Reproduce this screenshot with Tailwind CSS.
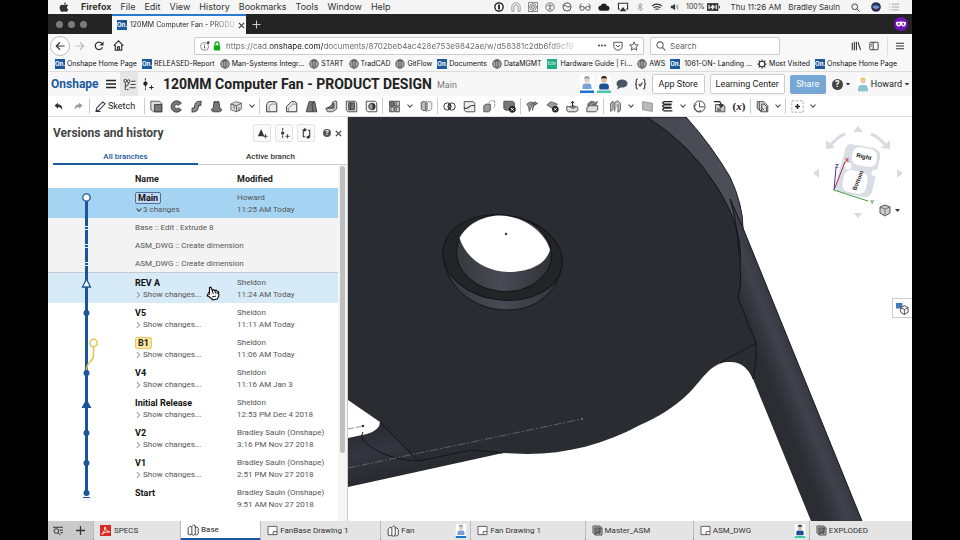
<!DOCTYPE html>
<html lang="en">
<head>
    <meta charset="UTF-8">
    <meta name="viewport" content="width=device-width, initial-scale=1.0">
    <title>120MM Computer Fan - PRODUCT DESIGN</title>
    <script src="https://cdn.jsdelivr.net/npm/@tailwindcss/browser@4"></script>
</head>
<body class="bg-black font-['Roboto',sans-serif] text-[#333]">

    <!-- Shared icons -->
    <svg class="hidden">
        <symbol id="chev" viewBox="0 0 8 8"><path d="M1.5 2.5 4 5.2 6.5 2.5" fill="none" stroke="#444" stroke-width="1.1"/></symbol>
        <symbol id="right" viewBox="0 0 8 8"><path d="M2 1.2 4.6 4 2 6.8" fill="none" stroke="#777"/></symbol>
        <symbol id="caret" viewBox="0 0 8 8"><path d="M1 2.5h6L4 6z" fill="#333"/></symbol>
        <symbol id="globe" viewBox="0 0 12 12"><g fill="none" stroke="#555"><circle cx="6" cy="6" r="5" stroke-width="1.3"/><ellipse cx="6" cy="6" rx="2.2" ry="5"/><path d="M1 6h10M2 3.4h8M2 8.6h8M6 1v10"/></g></symbol>
        <symbol id="part" viewBox="0 0 16 16"><path d="M1.5 5.5 4 3l2.500 1v9.500L4 14.500l-2.500-1zM6.500 3.500 9 1l2 1.500v11l-2.500 1.500-2-1M10.500 4h3l1.500 2v7l-2 1.500h-2" fill="#fff" stroke="#333" stroke-width="1.2"/></symbol>
        <symbol id="drawing" viewBox="0 0 16 16"><path d="M1.500 2h13v12h-13zM9 14v-4.500h5.500" fill="#fff" stroke="#444" stroke-width="1.2"/></symbol>
        <symbol id="asm" viewBox="0 0 16 16"><path d="M1.500 1.500h10l3 3v10h-10l-3-3z" fill="#ddd" stroke="#333" stroke-width="1.3"/><path d="M4 4h7.500v7.500H4z" fill="#777" stroke="#333"/><path d="M4.500 14.500V12h7.500V4.500h2.500" fill="none" stroke="#333"/></symbol>
        <symbol id="person-light" viewBox="0 0 14 18"><path d="M0 0h14v18H0z" fill="#fff"/><circle cx="7" cy="5" r="2.600" fill="#e2cdbd"/><path d="M4.300 4Q4 1 7 1t2.700 3L7 3z" fill="#999"/><path d="M2.500 14Q2 8.500 5 8.500h4Q12 8.500 11.500 14z" fill="#7b9fd6"/><path d="M0 15.500h14V18H0z" fill="#1d72cf"/></symbol>
        <symbol id="person-dark" viewBox="0 0 14 18"><path d="M0 0h14v18H0z" fill="#fff"/><circle cx="7" cy="5" r="2.600" fill="#e2b99c"/><path d="M4.300 4.500Q3.500 1 7 1t2.700 3.500L9 3.300H5z" fill="#222"/><path d="M2.500 14.500Q1 8.500 5 8.500h4Q13 8.500 11.500 14.500z" fill="#1b4f99"/><path d="M0 15.500h14V18H0z" fill="#49c5ac"/></symbol>
    </svg>

    <div class="mx-12 flex min-h-screen flex-col bg-white">

        <!-- macOS menu bar -->
        <nav class="flex h-[14px] items-center bg-[#f5f5f5] pr-3 pl-[11px] font-['Inter',sans-serif] text-[9px] leading-3 whitespace-nowrap text-[#333]">
            <svg class="mr-3 size-[10px]" viewBox="0 0 16 16"><path d="M11 .5C9 .8 8 2.200 8.100 4 10 3.900 11.100 2.300 11 .5zM8.200 4.800C7.200 4.800 6.400 4.200 5 4.200 2.800 4.200 1 6.200 1 9s2 6.800 4 6.800c1.200 0 1.700-.7 3.200-.7s1.900.7 3.100.7c1.700 0 3-2.500 3.500-4-3-1.300-2.900-5 0-6.300-.8-1-2-1.500-3.200-1.500-1.500 0-2.400.8-3.400.8z" fill="#333"/></svg>
            <div class="flex gap-[9px]">
                <b class="font-bold">Firefox</b><span>File</span><span>Edit</span><span>View</span><span>History</span><span>Bookmarks</span><span>Tools</span><span>Window</span><span>Help</span>
            </div>
            <div class="ml-auto flex items-center gap-[7px]">
                <svg class="size-[10px]" viewBox="0 0 12 12"><circle cx="6" cy="6" r="5" fill="none" stroke="#111" stroke-width="1.500"/><path d="M6 3v6" stroke="#111" stroke-width="2"/></svg>
                <svg class="size-[10px]" viewBox="0 0 12 12"><path d="M1 11V6a5 5 0 0 1 10 0v5H8.500V6a2.500 2.500 0 0 0-5 0v5z" fill="none" stroke="#888"/></svg>
                <svg class="size-[10px]" viewBox="0 0 12 12" fill="none" stroke="#666"><path d="M.5.5h11v11H.5z"/><circle cx="6" cy="6" r="4"/><circle cx="6" cy="6" r="1.800"/></svg>
                <svg class="size-[10px]" viewBox="0 0 12 12" fill="none" stroke="#555"><circle cx="6" cy="6" r="5"/><path d="M3 4.500h6M6 4.500V7L4.500 9.500M6 7l1.500 2.500M6 2.500v1"/></svg>
                <svg class="size-[10px]" viewBox="0 0 12 12" fill="none" stroke="#333"><circle cx="6" cy="6" r="4.800"/><path d="M2 4.500c3-2 3 3 8 1"/></svg>
                <svg class="h-[10px] w-3" viewBox="0 0 14 12" fill="none" stroke="#444"><circle cx="3.500" cy="7.500" r="2.500"/><circle cx="10.500" cy="7.500" r="2.500"/><path d="M1 7V4l1.500-2M13 7V4l-1.500-2M6 7h2"/></svg>
                <svg class="h-[10px] w-3" viewBox="0 0 14 12"><path d="M3.500 10.500a3 3 0 0 1-.5-6 4 4 0 0 1 7.600 0 3 3 0 0 1 0 6z" fill="#222"/></svg>
                <svg class="h-[10px] w-3" viewBox="0 0 14 12"><path d="M3 8.500H1.500v-7h11v7H11" fill="none" stroke="#333" stroke-width="1.300"/><path d="m7 6 4 5H3z" fill="#333"/></svg>
                <svg class="h-[10px] w-2" viewBox="0 0 8 12"><path d="M1 3.500 7 8 4 10.500v-9L7 4 1 8.500" fill="none" stroke="#999"/></svg>
                <svg class="h-[10px] w-3" viewBox="0 0 14 12" fill="none" stroke="#333" stroke-width="1.300"><path d="M1 5a8.500 8.500 0 0 1 12 0M3 7.200a5.600 5.600 0 0 1 8 0M5 9.200a2.800 2.800 0 0 1 4 0"/></svg>
                <svg class="h-[10px] w-[9px]" viewBox="0 0 11 12"><path d="M1 4.500h2L6 2v8L3 7.500H1z" fill="#333"/><path d="M7.500 4v4M9.500 3v6" stroke="#888"/></svg>
                <span class="flex items-center gap-[2px] text-[7px]">100%
                    <svg class="h-[8px] w-[13px]" viewBox="0 0 15 9"><path d="M0 0h13v9H0z" fill="#333"/><path d="M13.500 3h1.500v3h-1.500z" fill="#555"/><path d="M3 2.500H2v4h1M10 2.500h1v4h-1M4 5l3-3v2h2L6 7.500V5z" stroke="#fff" stroke-width=".7" fill="#fff"/></svg>
                </span>
                <span class="ml-1 text-[8px]">Thu 11:26 AM</span>
                <span class="text-[8px]">Bradley Sauln</span>
                <svg class="ml-1 size-[9px]" viewBox="0 0 12 12" fill="none" stroke="#333" stroke-width="1.200"><circle cx="5" cy="5" r="3.800"/><path d="m8 8 3.500 3.500"/></svg>
                <svg class="ml-1 size-[10px]" viewBox="0 0 12 12"><circle cx="6" cy="6" r="5.800" fill="#263056"/><path d="M1.500 6q3-4 9 0-4 4-9 0" fill="#4e9fe0"/><path d="M3 6.500q3 3 6-1" stroke="#d765b4" fill="none" stroke-width="1.300"/></svg>
                <svg class="h-[10px] w-3" viewBox="0 0 14 12" stroke="#999"><path d="M1 2.500h1M4 2.500h9M1 6h1M4 6h9M1 9.500h1M4 9.500h9"/></svg>
            </div>
        </nav>

        <!-- Browser tab strip -->
        <div class="flex h-5 items-center bg-[#242424] font-['Inter',sans-serif]">
            <div class="flex w-16 gap-[5px] pl-2">
                <i class="size-[7px] rounded-full bg-[#7c7c80]"></i><i class="size-[7px] rounded-full bg-[#7c7c80]"></i><i class="size-[7px] rounded-full bg-[#7c7c80]"></i>
            </div>
            <div class="flex h-5 w-[134px] items-center gap-[3px] border-t-2 border-[#2a7ad0] bg-[#f8f8f8] px-[5px]">
                <span class="size-[10px] shrink-0 bg-[#1b5a9e] text-center text-[6px] leading-[10px] font-bold text-white">On.</span>
                <span class="bg-linear-to-r from-[#222] from-75% to-[#222]/20 bg-clip-text text-[7px] leading-3 whitespace-nowrap text-transparent">120MM Computer Fan - PRODU</span>
                <button aria-label="Close tab" class="ml-auto"><svg class="size-[7px]" viewBox="0 0 8 8"><path d="m1 1 6 6M7 1 1 7" stroke="#333" stroke-width="1.200"/></svg></button>
            </div>
            <button aria-label="New tab" class="ml-[6px]"><svg class="size-[9px]" viewBox="0 0 10 10"><path d="M5 .5v9M.5 5h9" stroke="#ccc" stroke-width="1.200"/></svg></button>
            <span class="mr-1 ml-auto flex size-[14px] items-center justify-center rounded-full bg-[#7112b5]">
                <svg class="h-[6px] w-[10px]" viewBox="0 0 10 6"><path d="M0 1q5-1 10 0 0 4.500-2.500 4.500Q6 5.500 5 4 4 5.500 2.500 5.500 0 5.500 0 1z" fill="#fff"/><circle cx="2.800" cy="3" r="1" fill="#7112b5"/><circle cx="7.200" cy="3" r="1" fill="#7112b5"/></svg>
            </span>
        </div>

        <!-- Address bar -->
        <div class="flex h-[22px] items-center bg-[#f8f8f8] pt-px pr-2 pl-[2px] font-['Inter',sans-serif]">
            <button aria-label="Back" class="flex size-5 items-center justify-center rounded-full border border-[#bbb] bg-white"><svg class="size-[10px]" viewBox="0 0 12 12"><path d="M11.500 6H1.500M6 1.500 1.500 6 6 10.500" fill="none" stroke="#333" stroke-width="1.400"/></svg></button>
            <button aria-label="Forward" class="ml-[5px]"><svg class="size-[10px]" viewBox="0 0 12 12"><path d="M.5 6h10M6 1.500 10.500 6 6 10.500" fill="none" stroke="#bbb" stroke-width="1.400"/></svg></button>
            <button aria-label="Reload" class="ml-[9px]"><svg class="size-[10px]" viewBox="0 0 12 12"><path d="M10.200 7.500A4.500 4.500 0 1 1 9.500 3" fill="none" stroke="#333" stroke-width="1.500"/><path d="M11.500.5v5h-5z" fill="#333"/></svg></button>
            <button aria-label="Home" class="ml-[9px]"><svg class="size-[11px]" viewBox="0 0 12 12"><path d="M.8 6.200 6 1l5.200 5.200M2.500 5.500V11h7V5.500M5 11V7.500h2V11" fill="none" stroke="#333" stroke-width="1.300"/></svg></button>
            <div class="ml-[70px] flex h-[18px] grow items-center rounded-[2px] border border-[#ccc] bg-white pr-1 pl-[5px]">
                <svg class="size-[10px]" viewBox="0 0 12 12"><circle cx="5.500" cy="6.500" r="4.800" fill="none" stroke="#777"/><path d="M5.500 5.500v3.500M5.500 3.500v1" stroke="#555" stroke-width="1.200"/><circle cx="10" cy="2" r="1.600" fill="#444"/></svg>
                <svg class="ml-[3px] h-[10px] w-2" viewBox="0 0 10 12"><path d="M2.500 5V3.500a2.500 2.500 0 0 1 5 0V5" fill="none" stroke="#12a812" stroke-width="1.600"/><rect x="1" y="5" width="8" height="6.500" rx="1" fill="#12a812"/></svg>
                <input aria-label="Address" type="text" class="ml-[5px] w-[356px] bg-[linear-gradient(90deg,#666_0_44px,#111_44px_97px,#666_97px_320px,#ddd_350px)] bg-clip-text text-[8px] leading-3 text-transparent" value="https://cad.onshape.com/documents/8702beb4ac428e753e9842ae/w/d58381c2db6fd9cf9">
                <div class="ml-auto flex items-center gap-[6px]">
                    <svg class="h-[3px] w-[10px]" viewBox="0 0 12 4" fill="#444"><circle cx="2" cy="2" r="1.300"/><circle cx="6" cy="2" r="1.300"/><circle cx="10" cy="2" r="1.300"/></svg>
                    <svg class="size-[10px]" viewBox="0 0 12 12" fill="none" stroke="#555" stroke-width="1.200"><path d="M1 1.500h10V6a5 5 0 0 1-10 0z"/><path d="M3.500 4.800 6 7.200l2.500-2.400"/></svg>
                    <svg class="size-[10px]" viewBox="0 0 12 12"><path d="m6 1 1.500 3.400 3.700.4-2.800 2.500.8 3.700L6 9.100 2.800 11l.8-3.700L.8 4.800l3.700-.4z" fill="none" stroke="#555" stroke-width="1.200"/></svg>
                </div>
            </div>
            <label class="ml-[6px] flex h-[18px] w-[130px] items-center gap-1 rounded-[2px] border border-[#ccc] bg-white px-[5px]">
                <svg class="size-[10px] shrink-0" viewBox="0 0 12 12" fill="none" stroke="#666" stroke-width="1.300"><circle cx="4.800" cy="4.800" r="3.800"/><path d="m7.500 7.500 4 4"/></svg>
                <input type="text" aria-label="Search" placeholder="Search" class="w-full text-[8px] leading-3 placeholder-[#666]">
            </label>
            <div class="ml-[71px] flex items-center gap-2">
                <svg class="size-[10px]" viewBox="0 0 12 12"><path d="M1.500 2v9M4 1v10M6.500 1v10M8.500 1.500l3 9.500" stroke="#333" stroke-width="1.300"/></svg>
                <svg class="size-[10px]" viewBox="0 0 12 12" fill="none" stroke="#444" stroke-width="1.200"><rect x="1" y="1.500" width="10" height="9" rx="1"/><path d="M5 1.500v9M2.500 4h1.200M2.500 6h1.200"/></svg>
                <i class="h-[18px] w-px bg-[#ddd]"></i>
                <svg class="size-2" viewBox="0 0 10 10"><path d="M0 1.500h10M0 5h10M0 8.500h10" stroke="#333" stroke-width="1.300"/></svg>
            </div>
        </div>

        <!-- Bookmarks -->
        <div class="flex h-4 items-center gap-[5px] border-b border-[#ddd] bg-[#f8f8f8] pl-[7px] font-['Inter',sans-serif] text-[7px] leading-3 whitespace-nowrap text-[#111]">
            <a href="#" class="flex items-center gap-[2px]"><span class="size-[10px] bg-[#1b5a9e] text-center text-[6px] leading-[10px] font-bold text-white">On.</span>Onshape Home Page</a>
            <a href="#" class="flex items-center gap-[2px]"><span class="size-[10px] bg-[#1b5a9e] text-center text-[6px] leading-[10px] font-bold text-white">On.</span>RELEASED-Report</a>
            <a href="#" class="flex items-center gap-[2px]"><svg class="size-[10px]"><use href="#globe"/></svg>Man-Systems Integr...</a>
            <a href="#" class="flex items-center gap-[2px]"><svg class="size-[10px]"><use href="#globe"/></svg>START</a>
            <a href="#" class="flex items-center gap-[2px]"><svg class="size-[10px]"><use href="#globe"/></svg>TradCAD</a>
            <a href="#" class="flex items-center gap-[2px]"><svg class="size-[10px]"><use href="#globe"/></svg>GitFlow</a>
            <a href="#" class="flex items-center gap-[2px]"><span class="size-[10px] bg-[#1b5a9e] text-center text-[6px] leading-[10px] font-bold text-white">On.</span>Documents</a>
            <a href="#" class="flex items-center gap-[2px]"><svg class="size-[10px]"><use href="#globe"/></svg>DataMGMT</a>
            <a href="#" class="flex items-center gap-1"><span class="size-[10px] bg-[#1fae87] text-center text-[4px] leading-[10px] text-white">fctiv</span>Hardware Guide | Fi...</a>
            <a href="#" class="flex items-center gap-[2px]"><svg class="size-[10px]"><use href="#globe"/></svg>AWS</a>
            <a href="#" class="flex items-center gap-1"><span class="size-[10px] bg-[#1b5a9e] text-center text-[6px] leading-[10px] font-bold text-white">On.</span>1061-ON- Landing ...</a>
            <a href="#" class="flex items-center gap-[2px]"><svg class="size-[10px]" viewBox="0 0 12 12" fill="none" stroke="#333"><circle cx="6" cy="6" r="3.300" stroke-width="1.300"/><path d="M6 .5v2M6 9.500v2M.5 6h2M9.500 6h2M2 2l1.500 1.500M8.500 8.500 10 10M10 2 8.500 3.500M3.500 8.500 2 10" stroke-width="1.500"/></svg>Most Visited</a>
            <a href="#" class="flex items-center gap-[2px]"><span class="size-[10px] bg-[#1b5a9e] text-center text-[6px] leading-[10px] font-bold text-white">On.</span>Onshape Home Page</a>
        </div>

        <!-- Document header -->
        <header class="flex h-6 items-center bg-[#f7f7f7] pr-[2px] pl-[3px] whitespace-nowrap">
            <b class="w-12 text-[12px] leading-4 font-bold text-[#1b5a9e]">Onshape</b>
            <button aria-label="Menu" class="ml-[7px]"><svg class="size-[10px]" viewBox="0 0 10 10"><path d="M0 1.500h10M0 5h10M0 8.500h10" stroke="#222" stroke-width="1.500"/></svg></button>
            <button aria-label="Versions and history" class="ml-1 flex h-6 w-[18px] items-center justify-center bg-[#e6e6e6]"><svg class="size-[13px]" viewBox="0 0 14 14" fill="none" stroke="#333"><circle cx="2.500" cy="3" r="1.500"/><path d="M2.500 4.500V13M2.500 9Q6 9 6 5"/><circle cx="6" cy="3.500" r="1.500"/><path d="M9 3.500h4.500M8 7h5.500M7 10.500h6.500M4 12.500h2"/></svg></button>
            <button aria-label="Create version" class="ml-1"><svg class="size-[12px]" viewBox="0 0 14 14" fill="none" stroke="#222"><path d="M4 0v14" stroke-dasharray="3 1"/><circle cx="4" cy="6.500" r="2" fill="#222"/><path d="M8.500 11h5M11 8.500v5" stroke-width="1.200"/></svg></button>
            <h1 class="ml-[9px] text-[14px] leading-5 font-bold text-[#222]">120MM Computer Fan - PRODUCT DESIGN</h1>
            <span class="ml-[5px] pt-px text-[9px] leading-4 text-[#777]">Main</span>
            <div class="ml-auto flex items-center">
                <svg class="h-[18px] w-[14px]"><use href="#person-light"/></svg>
                <svg class="ml-[3px] h-[18px] w-[14px]"><use href="#person-dark"/></svg>
                <svg class="ml-[5px] h-[11px] w-3" viewBox="0 0 12 11"><path d="M6 .5C2.500.5.5 2.300.5 4.600c0 1.200.6 2.200 1.500 3L1 10.500l3.500-2c4 .6 7-1.200 7-3.900C11.500 2.300 9.500.5 6 .5z" fill="#4a5563"/></svg>
                <svg class="ml-[6px] h-[12px] w-[13px]" viewBox="0 0 14 12" fill="none" stroke="#444" stroke-width="1.300"><path d="M4 .8C2 .8 2.500 2 2.500 4S2 6 1 6c1 0 1.500 0 1.500 2S2 11.200 4 11.200M10 .8c2 0 1.500 1.200 1.500 3.200s.5 2 1.500 2c-1 0-1.500 0-1.500 2s.5 3.200-1.500 3.200M5 6l1.500 2L9 4.500"/></svg>
                <button class="ml-[5px] h-5 w-[53px] rounded-[2px] border border-[#ccc] bg-white text-[9px] leading-4 text-[#222]">App Store</button>
                <button class="ml-[5px] h-5 w-[75px] rounded-[2px] border border-[#ccc] bg-white text-[9px] leading-4 text-[#222]">Learning Center</button>
                <button class="ml-[5px] h-[19px] w-9 rounded-[2px] bg-[#76a6d3] text-[9px] leading-4 text-white">Share</button>
                <button aria-label="Help" class="ml-[6px] flex items-center gap-[2px]"><span class="size-[11px] rounded-full bg-[#444] text-center text-[9px] leading-[11px] font-bold text-white">?</span><svg class="size-[6px]"><use href="#caret"/></svg></button>
                <button class="ml-[6px] flex items-center gap-[2px] text-[9px] leading-4 text-[#222]">
                    <svg class="h-[16px] w-3" viewBox="0 0 12 16"><path d="M0 0h12v16H0z" fill="#fff"/><circle cx="6" cy="5" r="2.500" fill="#ecc9a5"/><path d="M3.200 4.500Q3 1.500 6 1.500t2.800 3L8 3.500H4z" fill="#e0c060"/><path d="M1 15.500Q.5 9 4 9h4q3.500 0 3 6.500z" fill="#8cc5d0"/></svg>
                    Howard<svg class="size-[6px]"><use href="#caret"/></svg>
                </button>
            </div>
        </header>

        <!-- Feature toolbar -->
        <div class="flex h-[21px] items-center border-b border-[#ddd] bg-white pr-2">
            <button aria-label="Undo" class="flex w-5 justify-center"><svg class="h-[9px] w-[9px]" viewBox="0 0 10 10"><path d="M.5 4 4.500.8v2C8 2.800 9.500 5 9 9 8 6.500 7 5.500 4.500 5.500v2z" fill="#333"/></svg></button>
            <button aria-label="Redo" class="flex w-5 justify-center"><svg class="h-[9px] w-[9px]" viewBox="0 0 10 10"><path d="M9.500 4 5.500.8v2C2 2.800.5 5 1 9 2 6.500 3 5.500 5.500 5.500v2z" fill="#999"/></svg></button>
            <i class="mx-px h-4 w-px bg-[#ccc]"></i>
            <button class="ml-1 flex w-12 items-center gap-[2px] text-[9px] leading-4 text-[#222]"><svg class="size-[11px]" viewBox="0 0 12 12"><path d="M1 11 2 7.500 8.500 1 11 3 4.500 9.800zM1 11.500h5" fill="#fff" stroke="#333" stroke-width="1.100"/></svg>Sketch</button>
            <i class="mx-px h-4 w-px bg-[#ccc]"></i>
            <button aria-label="Extrude" class="flex w-5 justify-center"><svg class="size-[13px]" viewBox="0 0 16 16"><path d="M1 1.500h10l3.500 2.500v10.500H4.500L1 12z" fill="#ddd" stroke="#444"/><path d="M5.500 5.500h9v9h-9z" fill="#777" stroke="#333"/></svg></button>
            <button aria-label="Revolve" class="flex w-5 justify-center"><svg class="size-[13px]" viewBox="0 0 16 16"><path d="M14 4A7 7 0 1 0 14 12L10 9.800A2.500 2.500 0 1 1 10 6.500z" fill="#777" stroke="#333"/></svg></button>
            <button aria-label="Sweep" class="flex w-5 justify-center"><svg class="size-[13px]" viewBox="0 0 16 16"><path d="M2 12.500q6 0 6-4.500T14 4" fill="none" stroke="#333" stroke-width="6"/><path d="M3 12.500q5 0 5-4.500T13 4" fill="none" stroke="#888" stroke-width="4"/></svg></button>
            <button aria-label="Loft" class="flex w-5 justify-center"><svg class="size-[13px]" viewBox="0 0 16 16"><path d="M5 2h6l1 7 2.500 3.500L12 14.500H4l-2.500-2L4 9z" fill="#777" stroke="#333"/><path d="M5 2q3 2 6 0" fill="#bbb" stroke="#333"/></svg></button>
            <button aria-label="Thicken" class="flex w-5 justify-center"><svg class="size-[13px]" viewBox="0 0 16 16"><path d="M1 5 7 2l7 2v7l-6 3.500L1 12z" fill="#ddd" stroke="#555"/><path d="M1 5l7 2 6-3M8 7v7.500M11 9v5M5 7v4" fill="none" stroke="#444"/></svg></button>
            <button aria-label="More solids" class="flex w-3 justify-center"><svg class="size-2"><use href="#chev"/></svg></button>
            <i class="mx-px h-4 w-px bg-[#ccc]"></i>
            <button aria-label="Fillet" class="flex w-5 justify-center"><svg class="size-[13px]" viewBox="0 0 16 16"><path d="M2 14.500V7q0-5 5-5h5l2.500 2v10.500z" fill="#eee" stroke="#333" stroke-width="1.200"/><path d="M5 14V9q0-4 4-4h5" fill="none" stroke="#777"/></svg></button>
            <button aria-label="Chamfer" class="flex w-5 justify-center"><svg class="size-[13px]" viewBox="0 0 16 16"><path d="M2 14.500V8l6-6h4l2.500 2v10.500z" fill="#eee" stroke="#333" stroke-width="1.200"/><path d="M4.500 14V10L9.500 5h5" fill="none" stroke="#777"/></svg></button>
            <button aria-label="Draft" class="flex w-5 justify-center"><svg class="size-[13px]" viewBox="0 0 16 16"><path d="M5 2h7l2.500 12.500h-13z" fill="#777" stroke="#333"/><path d="M12 2 8.500 5 10 14.500" fill="none" stroke="#333"/></svg></button>
            <button aria-label="Rib" class="flex w-5 justify-center"><svg class="size-[13px]" viewBox="0 0 16 16"><path d="M1 10 9 9V3l4-2 1.500 1v9L9 14.500H3z" fill="#ccc" stroke="#333"/><path d="M3 10 11 4v6z" fill="#777" stroke="#333"/></svg></button>
            <button aria-label="Shell" class="flex w-5 justify-center"><svg class="size-[13px]" viewBox="0 0 16 16"><path d="M1.500 1.500h11l2 2v11h-11l-2-2z" fill="#ddd" stroke="#333"/><path d="M4.500 3.500h7v8.500h-7z" fill="#777" stroke="#333"/><path d="M7 3.500V12" stroke="#333"/></svg></button>
            <button aria-label="Hole" class="flex w-5 justify-center"><svg class="size-[13px]" viewBox="0 0 16 16"><path d="M1.500 1.500h11l2 2v11h-11l-2-2z" fill="#eee" stroke="#333"/><circle cx="8.500" cy="8" r="4" fill="#999" stroke="#333"/><path d="M8.500 4a4 4 0 0 1 0 8q2-4 0-8z" fill="#333"/></svg></button>
            <i class="mx-px h-4 w-px bg-[#ccc]"></i>
            <button aria-label="Pattern" class="flex w-5 justify-center"><svg class="size-[13px]" viewBox="0 0 16 16" stroke="#333"><path d="M2 1.500h5.500v6H2z" fill="#777"/><path d="M8.500 1.500H14v6H8.500zM2 8.500h5.500v6H2zM8.500 8.500H14v6H8.500z" fill="#ccc"/><path d="M4 1.500v13M10.500 1.500v13" stroke="#666"/></svg></button>
            <button aria-label="More patterns" class="flex w-3 justify-center"><svg class="size-2"><use href="#chev"/></svg></button>
            <button aria-label="Mirror" class="flex w-5 justify-center"><svg class="size-[13px]" viewBox="0 0 16 16"><path d="M1.500 3 5 1.500 7 3v10H3.500l-2-2z" fill="#bbb" stroke="#444"/><path d="M9 3l2-1.500L14.500 3v8l-2 2H9z" fill="#eee" stroke="#888"/><path d="M8 1v14" stroke="#555" stroke-dasharray="2 1"/></svg></button>
            <i class="mx-px h-4 w-px bg-[#ccc]"></i>
            <button aria-label="Boolean" class="flex w-5 justify-center"><svg class="size-[13px]" viewBox="0 0 16 16" fill="none" stroke="#333" stroke-width="1.200"><circle cx="5.500" cy="8" r="4.500"/><circle cx="10.500" cy="8" r="4.500"/><path d="M8 4.500q2.500 3.500 0 7-2.500-3.500 0-7z" fill="#888"/></svg></button>
            <button aria-label="Split" class="flex w-5 justify-center"><svg class="size-[13px]" viewBox="0 0 16 16"><path d="M1.500 2h11l2 2v10.500h-11l-2-2z" fill="#eee" stroke="#333"/><path d="M1.500 10q4 1 6-1.500T14.500 7" fill="none" stroke="#333" stroke-width="1.300"/></svg></button>
            <button aria-label="Transform" class="flex w-5 justify-center"><svg class="size-[13px]" viewBox="0 0 16 16"><path d="M1 7l3-2h5v8l-2 1.500H1z" fill="#999" stroke="#444"/><path d="M7 3l3-2h4.500v7L12 10" fill="none" stroke="#666" stroke-dasharray="2 1"/></svg></button>
            <button aria-label="Delete part" class="flex w-5 justify-center"><svg class="size-[13px]" viewBox="0 0 16 16"><path d="M1 1.500h11l2 2v9H3l-2-2z" fill="#777" stroke="#444"/><circle cx="11.500" cy="11.500" r="4.200" fill="#222"/><path d="m9.800 9.800 3.400 3.400m0-3.400-3.400 3.400" stroke="#fff" stroke-width="1.200"/></svg></button>
            <i class="mx-px h-4 w-px bg-[#ccc]"></i>
            <button aria-label="Modify fillet" class="flex w-5 justify-center"><svg class="size-[13px]" viewBox="0 0 16 16"><path d="M1 5q4-4 8-2l5 1-7 4-3 6q0-6-3-9z" fill="#999" stroke="#555"/><path d="M8 13q0-7 6-9M6 6l6-4" fill="none" stroke="#555" stroke-width="1.300"/></svg></button>
            <button aria-label="Delete face" class="flex w-5 justify-center"><svg class="size-[13px]" viewBox="0 0 16 16"><path d="M1 6 6 2l8 3-5 6z" fill="#999" stroke="#555"/><circle cx="11.500" cy="11.500" r="4" fill="#222"/><path d="m10 10 3 3m0-3-3 3" stroke="#fff" stroke-width="1.200"/></svg></button>
            <button aria-label="Move face" class="flex w-5 justify-center"><svg class="size-[13px]" viewBox="0 0 16 16"><path d="M1 8h3l4 2 5-2 1.500 1v4L12 14.500H3L1 13z" fill="#ddd" stroke="#333"/><path d="M2.500 8 9 6l5 2-5 3z" fill="#777"/><path d="M8 8V2M6 4l2-2.500L10 4" fill="none" stroke="#222" stroke-width="1.200"/></svg></button>
            <button aria-label="Replace face" class="flex w-5 justify-center"><svg class="size-[13px]" viewBox="0 0 16 16"><path d="M1 9l3-2h10.500v5l-2.500 2.500H1z" fill="#ddd" stroke="#333"/><path d="M2 5q4-5 7-3t5 0l-2 4q-4 0-5-1T3 8z" fill="#888" stroke="#444"/></svg></button>
            <i class="mx-px h-4 w-px bg-[#ccc]"></i>
            <button aria-label="Offset surface" class="flex w-5 justify-center"><svg class="size-[13px]" viewBox="0 0 16 16"><path d="M2 14V4l3-2.500v10zM7 14V3l3.500-2L14 4v9l-3 2V5" fill="#ccc" stroke="#444"/></svg></button>
            <button aria-label="More surfaces" class="flex w-3 justify-center"><svg class="size-2"><use href="#chev"/></svg></button>
            <button aria-label="Plane" class="flex w-5 justify-center"><svg class="size-[13px]" viewBox="0 0 16 16"><path d="M2 2l12 2v10L2 12z" fill="#bbb" stroke="#888"/></svg></button>
            <button aria-label="Helix" class="flex w-5 justify-center"><svg class="size-[13px]" viewBox="0 0 16 16"><path d="M14 2H4Q0 4 4 5h9M13 6H4q-4 1 0 3h9M13 10H4q-4 1 0 3.500h10" fill="none" stroke="#222" stroke-width="1.500"/></svg></button>
            <button aria-label="More curves" class="flex w-3 justify-center"><svg class="size-2"><use href="#chev"/></svg></button>
            <button aria-label="Composite part" class="flex w-5 justify-center"><svg class="size-[13px]" viewBox="0 0 16 16" fill="none" stroke="#444" stroke-width="1.200"><circle cx="8" cy="8" r="6.800"/><path d="M8 3v5.500h5.500M4 5a5 5 0 0 0 6 8"/></svg></button>
            <button aria-label="Import" class="flex w-5 justify-center"><svg class="size-[13px]" viewBox="0 0 16 16"><path d="M3 5.500h9l2.500 2v7H3z" fill="#ccc" stroke="#333"/><path d="M1 2h6q3 0 3 5M7.500 5.500 10 9l2.500-3.500" fill="none" stroke="#222" stroke-width="1.400"/><path d="M5 10h5v4.500H5z" fill="#777"/></svg></button>
            <button class="w-5 text-center font-['Liberation_Serif',serif] text-[11px] leading-4 font-bold text-[#222]">(<i>x</i>)</button>
            <i class="mx-px h-4 w-px bg-[#ccc]"></i>
            <button aria-label="Frame" class="flex w-5 justify-center"><svg class="size-[13px]" viewBox="0 0 16 16"><path d="M1.500 2h8l5 5v7.500h-8l-5-4z" fill="#ddd" stroke="#333"/><path d="M4 2v10l3 2V5h3l3 3v6M7 10l3 2" fill="none" stroke="#444" stroke-width="1.200"/></svg></button>
            <button aria-label="More frames" class="flex w-3 justify-center"><svg class="size-2"><use href="#chev"/></svg></button>
            <i class="mx-px h-4 w-px bg-[#ccc]"></i>
            <button aria-label="Custom feature" class="flex w-5 justify-center"><svg class="size-[13px]" viewBox="0 0 16 16" fill="none"><path d="M1 1h14v14H1z" stroke="#999" stroke-dasharray="3 2"/><path d="M8 5v6M5 8h6" stroke="#222" stroke-width="1.800"/></svg></button>
            <button aria-label="More features" class="flex w-3 justify-center"><svg class="size-2"><use href="#chev"/></svg></button>
        </div>

        <main class="flex grow">

            <!-- Versions and history panel -->
            <section class="flex w-[300px] shrink-0 flex-col border-r border-[#ccc] bg-white">
                <div class="flex h-8 items-center pr-[5px] pl-[5px]">
                    <h2 class="grow text-[12px] leading-4 font-bold text-[#444]">Versions and history</h2>
                    <div class="flex gap-1">
                        <button aria-label="Create version" class="flex size-[18px] items-center justify-center rounded-[2px] border border-[#e2e2e2] bg-[#fafafa]"><svg class="size-[11px]" viewBox="0 0 12 12"><path d="M4.500 1 8 9H1z" fill="#333"/><path d="M7 9h4.500M9.200 6.800v4.500" stroke="#333"/></svg></button>
                        <button aria-label="Create branch" class="flex size-[18px] items-center justify-center rounded-[2px] border border-[#e2e2e2] bg-[#fafafa]"><svg class="size-[11px]" viewBox="0 0 12 12"><path d="M4 0v12" stroke="#333" stroke-dasharray="3 1"/><circle cx="4" cy="5.500" r="1.800" fill="#333"/><path d="M7 9h4.500M9.200 6.800v4.500" stroke="#333"/></svg></button>
                        <button aria-label="Compare" class="flex size-[18px] items-center justify-center rounded-[2px] border border-[#e2e2e2] bg-[#fafafa]"><svg class="size-[11px]" viewBox="0 0 12 12" fill="none" stroke="#333" stroke-width="1.200"><path d="M5 2H2.500v7.500h2M7 10h2.500V2.500h-2M3.500.5 5.500 2l-2 1.500M8.500 8.500 6.500 10l2 1.500"/></svg></button>
                    </div>
                    <span class="ml-2 size-2 rounded-full bg-[#555] text-center text-[7px] leading-2 font-bold text-white">?</span>
                    <button aria-label="Close" class="ml-1"><svg class="size-[7px]" viewBox="0 0 8 8"><path d="m1 1 6 6M7 1 1 7" stroke="#444" stroke-width="1.600"/></svg></button>
                </div>
                <div class="ml-[5px] flex h-4 border-b border-[#ccc] text-[8px] leading-4 font-medium">
                    <button class="h-4 w-[145px] border-b-2 border-[#1b5a9e] text-[#1b5a9e]">All branches</button>
                    <button class="h-4 w-[145px] text-[#333]">Active branch</button>
                </div>

                <div class="flex grow">
                    <div class="relative min-w-0 grow">
                        <table class="w-full table-fixed text-left text-[8px] leading-3 whitespace-nowrap text-[#555] [&_td]:pt-[2px]">
                            <thead>
                                <tr class="h-[23px] text-[9px] text-[#222]"><th class="w-[87px]"></th><th class="w-[102px] pt-1 font-bold">Name</th><th class="pt-1 font-bold">Modified</th></tr>
                            </thead>
                            <tbody>
                                <tr class="h-[30px] bg-[#a5d3f2]"><td></td><td><b class="block w-fit rounded-[2px] border border-[#4c6f9c] bg-[#c5d8f3] px-0.5 text-[9px] leading-[10px] text-[#111]">Main</b><span class="flex items-center"><svg class="size-2"><use href="#chev"/></svg>3 changes</span></td><td>Howard<br>11:25 AM Today</td></tr>
                                <tr class="h-[18px] bg-[#f3f3f3]"><td></td><td colspan="2">Base :: Edit : Extrude 8</td></tr>
                                <tr class="h-[18px] bg-[#f3f3f3]"><td></td><td colspan="2">ASM_DWG :: Create dimension</td></tr>
                                <tr class="h-[18px] bg-[#f3f3f3]"><td></td><td colspan="2">ASM_DWG :: Create dimension</td></tr>
                                <tr class="h-[31px] border-t border-[#c4ccd2] bg-[#d6eaf7]"><td></td><td><b class="block text-[9px] text-[#111]">REV A</b><span class="flex items-center"><svg class="size-2"><use href="#right"/></svg>Show changes...</span></td><td>Sheldon<br>11:24 AM Today</td></tr>
                                <tr class="h-[30px]"><td></td><td><b class="block text-[9px] text-[#111]">V5</b><span class="flex items-center"><svg class="size-2"><use href="#right"/></svg>Show changes...</span></td><td>Sheldon<br>11:11 AM Today</td></tr>
                                <tr class="h-[30px]"><td></td><td><b class="block w-fit rounded-[2px] border border-[#e8c765] bg-[#fbe6a2] px-0.5 text-[9px] leading-[10px] text-[#222]">B1</b><span class="flex items-center"><svg class="size-2"><use href="#right"/></svg>Show changes...</span></td><td>Sheldon<br>11:06 AM Today</td></tr>
                                <tr class="h-[30px]"><td></td><td><b class="block text-[9px] text-[#111]">V4</b><span class="flex items-center"><svg class="size-2"><use href="#right"/></svg>Show changes...</span></td><td>Sheldon<br>11:16 AM Jan 3</td></tr>
                                <tr class="h-[30px]"><td></td><td><b class="block text-[9px] text-[#111]">Initial Release</b><span class="flex items-center"><svg class="size-2"><use href="#right"/></svg>Show changes...</span></td><td>Sheldon<br>12:53 PM Dec 4 2018</td></tr>
                                <tr class="h-[30px]"><td></td><td><b class="block text-[9px] text-[#111]">V2</b><span class="flex items-center"><svg class="size-2"><use href="#right"/></svg>Show changes...</span></td><td>Bradley Sauln (Onshape)<br>3:16 PM Nov 27 2018</td></tr>
                                <tr class="h-[30px]"><td></td><td><b class="block text-[9px] text-[#111]">V1</b><span class="flex items-center"><svg class="size-2"><use href="#right"/></svg>Show changes...</span></td><td>Bradley Sauln (Onshape)<br>2:51 PM Nov 27 2018</td></tr>
                                <tr class="h-[30px]"><td></td><td><b class="block h-6 text-[9px] text-[#111]">Start</b></td><td>Bradley Sauln (Onshape)<br>9:51 AM Nov 27 2018</td></tr>
                            </tbody>
                        </table>
                        <!-- Branch graph, runs over the first column -->
                        <svg class="absolute top-[23px] left-[28px] h-[320px] w-6" viewBox="0 0 24 320" fill="none">
                            <path d="M10.500 9v297" stroke="#1b5497" stroke-width="3"/>
                            <path d="M7 309.500h7" stroke="#1b5497"/>
                            <path d="M8 38.500h5M8 41.500h5M8 56.500h5M8 59.500h5M8 74.500h5M8 77.500h5" stroke="#e8eef6"/>
                            <path d="M17.500 159v8q0 4-3.500 7t-3.500 9" stroke="#e5c64f" stroke-width="1.500"/>
                            <circle cx="17.500" cy="155" r="3.700" fill="#fff" stroke="#e5c64f" stroke-width="1.500"/>
                            <circle cx="10.500" cy="9.500" r="3.700" fill="#fff" stroke="#1b5497" stroke-width="1.300"/>
                            <path d="m10.500 91 4 8h-8z" fill="#fff" stroke="#1b5497" stroke-width="1.300"/>
                            <path d="m10.500 211 5 9h-10z" fill="#1b5497"/>
                            <g fill="#1b5497"><circle cx="10.500" cy="125" r="3"/><circle cx="10.500" cy="185" r="3"/><circle cx="10.500" cy="245" r="3"/><circle cx="10.500" cy="275" r="3"/><circle cx="10.500" cy="305" r="3"/></g>
                        </svg>
                        <!-- Hand cursor -->
                        <svg class="absolute top-[121px] left-[158px] h-[15px] w-[14px]" viewBox="0 0 14 15"><path d="M3.500 1.500Q5 .5 5.500 2.500l.8 2 1.200-.8 1.300.8 1.400-.4 1 1.200 1.300.4.3 4.300-1.500 3-4.500.8-3.500-3-2-1 .2-1.500 2-.3z" fill="#fff" stroke="#111" stroke-width="1.200"/><path d="M2 6 4 7.500M6.300 5l1 3M9 5l.6 2.500M11 6l.3 2M6 11l4-1" stroke="#111"/></svg>
                    </div>
                    <div class="w-[9px] shrink-0 bg-[#f5f5f5] px-[2px] pt-[1px]"><div class="h-[287px] rounded-full bg-[#bfbfbf]"></div></div>
                </div>
            </section>

            <!-- Model view -->
            <section class="relative grow overflow-hidden bg-white">
                <svg class="absolute inset-0 size-full" viewBox="348 117 564 404" preserveAspectRatio="xMinYMin slice">
                    <defs>
                        <linearGradient id="rim" x1="0" y1="0" x2="1" y2="1"><stop offset="0" stop-color="#464851"/><stop offset="1" stop-color="#50525c"/></linearGradient>
                        <linearGradient id="leg" gradientUnits="userSpaceOnUse" x1="762" y1="404" x2="812" y2="384"><stop offset="0" stop-color="#292c30"/><stop offset=".3" stop-color="#2b2d33"/><stop offset=".7" stop-color="#40424d"/><stop offset="1" stop-color="#32353b"/></linearGradient>
                        <linearGradient id="wall"><stop offset="0" stop-color="#36383d"/><stop offset=".5" stop-color="#484b54"/><stop offset="1" stop-color="#303236"/></linearGradient>
                        <linearGradient id="foot" gradientUnits="userSpaceOnUse" x1="375" y1="430" x2="388" y2="485"><stop offset="0" stop-color="#2a2d32"/><stop offset=".35" stop-color="#34363f"/><stop offset="1" stop-color="#25272c"/></linearGradient>
                    </defs>
                    <path d="M640 117h46Q712 146 730 177 743 205 743 228L747 300 700 250z" fill="url(#rim)" stroke="#17191c"/>
                    <path d="M731 200 743 228 782 324 862 521H811L753 379 735 340V230z" fill="url(#leg)"/>
                    <path d="M743 228 782 324 862 521" fill="none" stroke="#17191c"/>
                    <path d="M348 438 367 434Q380 430 380 422L440 440 503 453 348 487z" fill="url(#foot)"/>
                    <path d="M348 117H647Q690 144 717 187T740 265Q742 285 738 298L756 343Q757 362 753 379C748 368 741 361 728 362 710 363 702 380 690 392 674 408 658 417 640 425 605 444 567 454 527 454L503 453 472 450 418 461 380 422 348 400z" fill="#292c30"/>
                    <g fill="none" stroke="#121417">
                        <path d="M647 117Q690 144 717 187T740 265Q742 285 738 298L756 343 720 363M756 343Q757 362 753 379M730 199 743 228M730 199Q737 220 739 255"/>
                        <path d="M380 422 418 461Q390 460 371 447 358 438 363 432M418 461 472 450 503 453"/>
                    </g>
                    <path d="M348 468 582 419" stroke="#777" stroke-dasharray="8 2 2 2" stroke-width=".7"/>
                    <path d="M348 429 363 426" stroke="#777" stroke-dasharray="6 2" stroke-width=".8"/>
                    <circle cx="363" cy="426" r="1.200" fill="#333"/><circle cx="582" cy="419" r="1.200" fill="#666"/>

                    <!-- Hub hole -->
                    <path d="M443 250C443 285 472 310 507 310S562 286 562 258z" fill="url(#wall)" stroke="#131518"/>
                    <ellipse cx="502.500" cy="257.500" rx="60" ry="42.500" transform="rotate(8 502.500 257.500)" fill="#222428" stroke="#131518"/>
                    <ellipse cx="504" cy="253.500" rx="47.500" ry="38" transform="rotate(4 504 253.500)" fill="url(#wall)" stroke="#131518"/>
                    <path d="M459.500 238C468 222 486 215.500 500 215.500 522 216 544 230 550 250 546 264 530 272 508 272 484 271 466 258 459.500 238z" fill="#fff"/>
                    <circle cx="506" cy="234" r="1.200" fill="#333"/>
                </svg>

                <!-- View cube -->
                <svg class="absolute top-[9px] right-0 h-[92px] w-[102px]" viewBox="810 126 102 92">
                    <g fill="#d5dce2"><path d="m858 126 5 6h-10zM858 218l4-5h-8zM813 173l6-4v9zM903 173l-6-4v9z"/><path d="M826 140v9l9-1zM890 140v9l-9-1z"/></g>
                    <path d="M830 146Q837 137 845 134M886 146Q879 137 871 134" fill="none" stroke="#d5dce2" stroke-width="3"/>
                    <path d="M850 144 874 148Q881 150 880 158L872 192Q870 198 863 197L839 192Q834 190 836 184L845 150Q846 144 850 144z" fill="#d8dee4"/>
                    <rect x="852" y="148" width="25" height="18" rx="7" transform="rotate(10 864 157)" fill="#fff"/>
                    <rect x="843" y="171" width="24" height="22" rx="7" transform="rotate(12 855 182)" fill="#fff"/>
                    <circle cx="848" cy="166" r="3.500" fill="#fff"/><circle cx="875" cy="173" r="3.500" fill="#fff"/>
                    <path d="M834 190 845 162" stroke="#b02a48"/><path d="M834 190 836 168" stroke="#3a35a8"/><path d="M834 190 868 201" stroke="#3f9d45"/>
                    <g class="font-['Liberation_Sans',sans-serif] text-[6px] font-bold">
                        <text x="845" y="162" fill="#c8283a">X</text><text x="835" y="168" fill="#2e2aa8">Z</text><text x="870" y="204" fill="#2f9436">Y</text>
                        <text transform="translate(856 157) rotate(12)" fill="#222">Right</text>
                        <text transform="translate(856 191) rotate(-68)" fill="#222">Bottom</text>
                    </g>
                    <path d="M880 207 885 205 890 207V213L885 216 880 213z" fill="#ccc" stroke="#555"/><path d="M880 207 885 209 890 207M885 209V216" fill="none" stroke="#777"/>
                    <path d="M895 209h5l-2.500 3z" fill="#333"/>
                </svg>

                <button aria-label="Appearance" class="absolute top-[181px] right-0 flex h-5 w-5 items-center justify-center border border-r-0 border-[#ccc] bg-white"><svg class="size-[13px]" viewBox="0 0 14 14"><path d="M0 1h7v6H0z" fill="#3f7cb8"/><path d="M9 4l4 2v5l-4 2.500L5 11V6zM5 6l4 2 4-2M9 8v5.500" fill="#fff" stroke="#444"/></svg></button>
            </section>
        </main>

        <!-- Document tabs -->
        <footer class="grid h-[19px] grid-cols-[45px_86fr_79fr_119fr_89fr_113fr_107fr_115fr_102fr] gap-px border-b border-[#888] bg-[#bbb] text-[8px] leading-4 whitespace-nowrap text-[#333]">
            <div class="flex items-center gap-[13px] bg-[#cacaca] pl-[5px]">
                <svg class="size-[10px]" viewBox="0 0 12 12" fill="none" stroke="#333" stroke-width="1.200"><circle cx="4" cy="6" r="2.800"/><path d="m6 8 3 3M0 1.500h12M8 5h4M9 8h3"/></svg>
                <svg class="size-[9px]" viewBox="0 0 10 10"><path d="M5 0v10M0 5h10" stroke="#333" stroke-width="1.400"/></svg>
            </div>
            <button class="flex items-center gap-[3px] bg-[#e4e4e4] pl-[6px]"><svg class="size-[11px]" viewBox="0 0 12 12"><path d="M0 0h12v12H0z" fill="#d92b20"/><path d="M2 10Q6 6 5.500 2q1 5 5 5.500Q5 7 2 10z" fill="none" stroke="#fff"/></svg>SPECS</button>
            <button class="flex items-center gap-[2px] border-b-2 border-[#1b5a9e] bg-white pt-px pl-[6px] text-[#222]"><svg class="size-3"><use href="#part"/></svg>Base</button>
            <button class="flex items-center gap-[2px] bg-[#e4e4e4] pl-[6px]"><svg class="size-[11px]"><use href="#drawing"/></svg>FanBase Drawing 1</button>
            <button class="flex items-center gap-[2px] bg-[#e4e4e4] pr-[3px] pl-[6px]"><svg class="size-3"><use href="#part"/></svg>Fan<svg class="ml-auto h-[14px] w-3" viewBox="0 0 14 18"><use href="#person-light"/></svg></button>
            <button class="flex items-center gap-[2px] bg-[#e4e4e4] pl-[6px]"><svg class="size-[11px]"><use href="#drawing"/></svg>Fan Drawing 1</button>
            <button class="flex items-center gap-[2px] bg-[#e4e4e4] pl-[6px]"><svg class="size-[11px]"><use href="#asm"/></svg>Master_ASM</button>
            <button class="flex items-center gap-[2px] bg-[#e4e4e4] pr-[3px] pl-[6px]"><svg class="size-[11px]"><use href="#drawing"/></svg>ASM_DWG<svg class="ml-auto h-[14px] w-3" viewBox="0 0 14 18"><use href="#person-dark"/></svg></button>
            <button class="flex items-center gap-[2px] bg-[#e4e4e4] pl-[6px]"><svg class="size-[11px]"><use href="#asm"/></svg>EXPLODED</button>
        </footer>
    </div>

</body>
</html>
